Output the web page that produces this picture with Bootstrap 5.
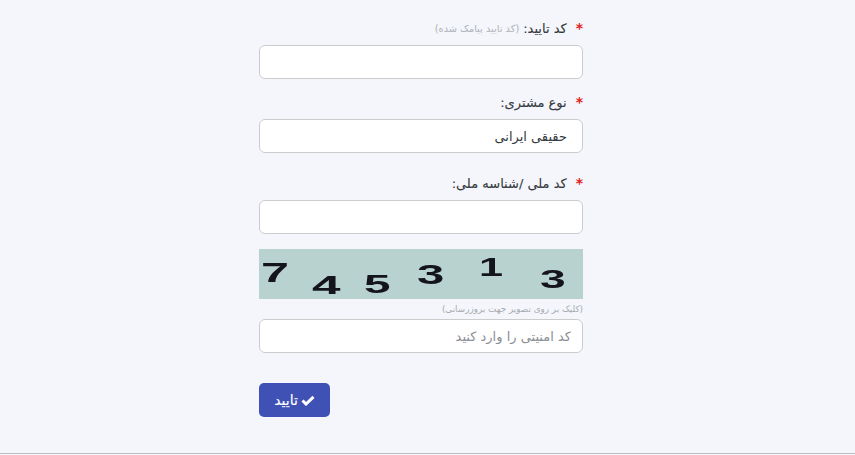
<!DOCTYPE html>
<html lang="fa" dir="rtl">
<head>
<meta charset="utf-8">
<title>تایید</title>
<link href="https://cdn.jsdelivr.net/npm/bootstrap@5.3.0/dist/css/bootstrap.min.css" rel="stylesheet">
<style>
html,body{height:455px;overflow:hidden}
body{background:#f4f6fb;font-family:"DejaVu Sans",sans-serif;color:#343a40;font-size:13px}
.page-box{height:454px;border-bottom:1px solid #bdbdbd;padding-top:19px;padding-left:0;padding-right:13px}
.form-col{width:324px}
.lbl{display:flex;align-items:center;height:19px;margin-bottom:7px;padding-right:0;font-size:13px;line-height:19px;white-space:nowrap;-webkit-text-stroke:.1px #343a40}
.req{color:#e02020;font-weight:700;margin-left:9px;font-size:14px;-webkit-text-stroke:0}
.hint{color:#adb1b8;font-size:9.8px;margin-right:4px;-webkit-text-stroke:0}
.fld{height:34px;border:1px solid #ccc;border-radius:6px;background:#fff;font-size:13px;padding:0 15px;color:#343a40;box-shadow:none}
.fld::placeholder{color:#8b8f94;opacity:1}
.fld-cap{padding-right:11px}
.gap-a{margin-bottom:14px}
.gap-b{margin-bottom:21px}
.gap-c{margin-bottom:15px}
.cap-img{display:block;width:324px;height:50px;background:#b8d2cf}
.cap-txt{font-family:"Liberation Sans",sans-serif;font-weight:700;fill:#14141c;direction:ltr;filter:blur(.4px)}
.cap-hint{height:20px;line-height:21px;font-size:8.8px;color:#a6aab0}
.go-btn{width:71px;height:34px;margin-top:30px;background:#3f51b5;border:0;border-radius:5px;color:#fff;font-size:14px;padding:0;display:flex;align-items:center;justify-content:center;gap:3px;-webkit-text-stroke:.15px #fff}
.go-btn:hover{background:#3f51b5;color:#fff}
</style>
</head>
<body>
<div class="page-box d-flex justify-content-center">
<form class="form-col">
<label class="lbl"><span class="req">*</span><span>کد تایید:</span><span class="hint">(کد تایید پیامک شده)</span></label>
<input class="form-control fld gap-a" type="text" aria-label="کد تایید">
<label class="lbl"><span class="req">*</span><span>نوع مشتری:</span></label>
<input class="form-control fld gap-b" type="text" value="حقیقی ایرانی" aria-label="نوع مشتری">
<label class="lbl"><span class="req">*</span><span>کد ملی /شناسه ملی:</span></label>
<input class="form-control fld gap-c" type="text" aria-label="کد ملی">
<svg class="cap-img" viewBox="0 0 324 50" role="img" aria-label="captcha">
<text class="cap-txt" font-size="28" transform="translate(2 33) scale(1.8 1)">7</text>
<text class="cap-txt" font-size="27" transform="translate(53 45) scale(1.9 .95)">4</text>
<text class="cap-txt" font-size="28" transform="translate(105 44) scale(1.7 .95)">5</text>
<text class="cap-txt" font-size="28" transform="translate(158 35) scale(1.75 .98)">3</text>
<text class="cap-txt" font-size="27" transform="translate(220 27) scale(1.6 .98)">1</text>
<text class="cap-txt" font-size="28" transform="translate(281 39) scale(1.65 .95)">3</text>
</svg>
<div class="cap-hint">(کلیک بر روی تصویر جهت بروزرسانی)</div>
<input class="form-control fld fld-cap" type="text" placeholder="کد امنیتی را وارد کنید" aria-label="کد امنیتی">
<button class="btn go-btn me-auto" type="button">
<svg width="14" height="11" viewBox="0 0 14 11" aria-hidden="true"><path d="M1.5 5.5 5 9 12.5 1.8" fill="none" stroke="#fff" stroke-width="3"/></svg>
<span>تایید</span>
</button>
</form>
</div>
<script src="https://cdn.jsdelivr.net/npm/bootstrap@5.3.0/dist/js/bootstrap.bundle.min.js"></script>
</body>
</html>
